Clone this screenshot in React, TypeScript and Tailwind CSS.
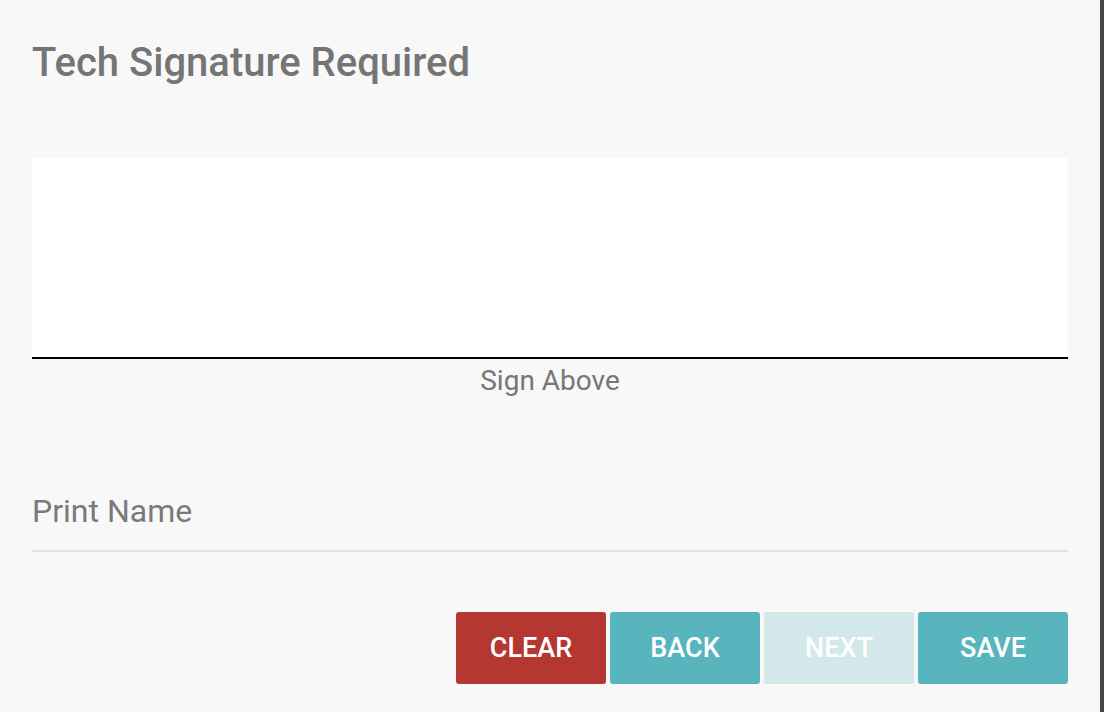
import React from "react";

const font = { fontFamily: "Roboto, 'Liberation Sans', sans-serif" };

function ActionButton({ label, className }: { label: string; className: string }) {
  return (
    <button
      type="button"
      className={`w-[150px] h-[72px] rounded-[3px] text-[27px] font-medium uppercase text-white ${className}`}
    >
      {label}
    </button>
  );
}

export default function App() {
  return (
    <div className="flex w-[1104px] h-[712px] bg-[#f8f8f8]" style={font}>
      <div className="flex-1 flex flex-col pl-[32px] pr-[32px]">
        <h1 className="mt-[39px] text-[40px] leading-[48px] font-medium text-[#757575]">Tech Signature Required</h1>

        <div className="mt-[71px] h-[201px] bg-white border-b-2 border-black" />
        <div className="mt-[6px] text-center text-[28px] leading-[32px] text-[#777]">Sign Above</div>

        <div className="mt-[95px] border-b-2 border-[#e0e0e0] pb-[20px]">
          <span className="text-[32px] leading-[38px] text-[#7a7a7a]">Print Name</span>
        </div>

        <div className="mt-[60px] flex justify-end gap-[4px]">
          <ActionButton label="Clear" className="bg-[#b53731]" />
          <ActionButton label="Back" className="bg-[#58b5bd]" />
          <ActionButton label="Next" className="bg-[#d2e8ea] text-[#f4fafa]" />
          <ActionButton label="Save" className="bg-[#58b5bd]" />
        </div>
      </div>
      <div className="w-[4px] bg-[#454545]" />
    </div>
  );
}
